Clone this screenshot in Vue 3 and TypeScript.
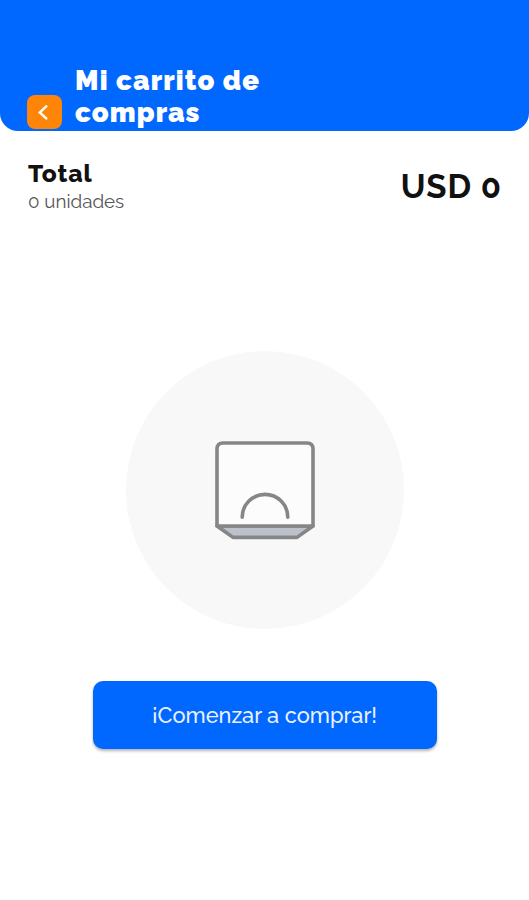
<script setup lang="ts">
const title: string[] = ['Mi carrito de', 'compras']
const units = 0
const amount = 0
</script>

<template>
  <main class="screen">
    <header class="header">
      <button class="back" type="button" aria-label="Volver">
        <svg width="35" height="34" viewBox="0 0 35 34" fill="none">
          <path d="M20 10.6 L12.8 17.4 L20 24.2" stroke="#fff" stroke-width="2.4" />
        </svg>
      </button>
      <h1 class="title">
        <span class="first">{{ title[0] }}</span>
        <span class="second">{{ title[1] }}</span>
      </h1>
    </header>

    <section class="summary">
      <div class="count">
        <h2 class="total">Total</h2>
        <p class="units">{{ units }} unidades</p>
      </div>
      <p class="amount">USD {{ amount }}</p>
    </section>

    <section class="empty">
      <div class="disc">
        <svg width="104" height="104" viewBox="0 0 104 104" fill="none" stroke="#858687" stroke-width="3.6">
          <path d="M4 88 L20 99.4 H84 L100 88 Z" fill="#bdc2ca" stroke-linejoin="round" />
          <path d="M4 88 V11 Q4 5 10 5 H94 Q100 5 100 11 V88 Z" fill="#fcfcfc" stroke-linejoin="round" />
          <path d="M29.2 79.2 A22.8 22.8 0 0 1 74.8 79.2" stroke-linecap="round" />
        </svg>
      </div>
      <button class="start" type="button"><span class="label">¡Comenzar a comprar!</span></button>
    </section>
  </main>
</template>

<style>
body {
  margin: 0;
  background: #fff;
}
</style>

<style scoped>
.screen {
  width: 100%;
  height: 900px;
  overflow: hidden;
  background: #fff;
  color: #111;
  font-family: Raleway, Lato, 'Open Sans', sans-serif;
}
.header {
  box-sizing: border-box;
  height: 131px;
  padding: 0 27px 2px;
  display: flex;
  align-items: flex-end;
  gap: 13px;
  background: #0168ff;
  border-radius: 0 0 18px 18px;
}
.back {
  width: 35px;
  height: 34px;
  padding: 0;
  border: 0;
  border-radius: 8px;
  background: #ff8508;
}
.back svg {
  display: block;
}
.title {
  margin: 0 0 1px;
  color: #fff;
  font-size: 27.5px;
  line-height: 32px;
  font-weight: 900;
}
.title span {
  display: block;
  white-space: nowrap;
}
.first {
  letter-spacing: 1.15px;
}
.second {
  letter-spacing: 1.1px;
}
.summary {
  box-sizing: border-box;
  height: 109px;
  padding: 28px 28px 0;
  display: flex;
  justify-content: space-between;
  align-items: flex-start;
}
.total {
  margin: 0;
  font-size: 24.5px;
  line-height: 30px;
  font-weight: 800;
  letter-spacing: 0.9px;
}
.units {
  margin: 0;
  color: #555;
  font-size: 18.8px;
  line-height: 24px;
  font-weight: 400;
}
.amount {
  margin: 8px -1px 0 0;
  font-size: 33px;
  line-height: 40px;
  font-weight: 700;
  letter-spacing: 0.9px;
}
.empty {
  padding-top: 111px;
  display: flex;
  flex-direction: column;
  align-items: center;
  gap: 52px;
}
.disc {
  width: 278px;
  height: 278px;
  display: flex;
  align-items: center;
  justify-content: center;
  border-radius: 50%;
  background: #f8f8f8;
}
.start {
  width: 344px;
  height: 67.5px;
  padding: 2px 0 0;
  border: 0;
  border-radius: 10px;
  background: #0168ff;
  box-shadow: 0 2px 3px rgba(0, 0, 0, 0.3);
  color: #e9f1ff;
  font: 500 21.8px/28px Raleway, Lato, 'Open Sans', sans-serif;
}
</style>
